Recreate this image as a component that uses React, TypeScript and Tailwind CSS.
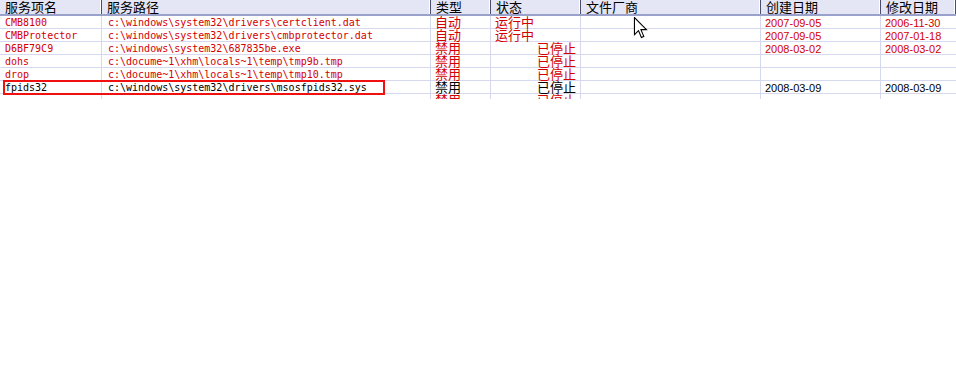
import React from 'react';

type Row = {
  name: string;
  path: string;
  type: string;
  status: string;
  stopped: boolean;
  created: string;
  modified: string;
  red: boolean;
};

const rows: Row[] = [
  { name: 'CMB8100', path: 'c:\\windows\\system32\\drivers\\certclient.dat', type: '自动', status: '运行中', stopped: false, created: '2007-09-05', modified: '2006-11-30', red: true },
  { name: 'CMBProtector', path: 'c:\\windows\\system32\\drivers\\cmbprotector.dat', type: '自动', status: '运行中', stopped: false, created: '2007-09-05', modified: '2007-01-18', red: true },
  { name: 'D6BF79C9', path: 'c:\\windows\\system32\\687835be.exe', type: '禁用', status: '已停止', stopped: true, created: '2008-03-02', modified: '2008-03-02', red: true },
  { name: 'dohs', path: 'c:\\docume~1\\xhm\\locals~1\\temp\\tmp9b.tmp', type: '禁用', status: '已停止', stopped: true, created: '', modified: '', red: true },
  { name: 'drop', path: 'c:\\docume~1\\xhm\\locals~1\\temp\\tmp10.tmp', type: '禁用', status: '已停止', stopped: true, created: '', modified: '', red: true },
  { name: 'fpids32', path: 'c:\\windows\\system32\\drivers\\msosfpids32.sys', type: '禁用', status: '已停止', stopped: true, created: '2008-03-09', modified: '2008-03-09', red: false },
  { name: '', path: '', type: '禁用', status: '已停止', stopped: true, created: '', modified: '', red: true },
];

const cjk = 'text-[13px] leading-[12px] [font-family:"Noto_Sans_CJK_SC",sans-serif]';
const mono = 'text-[10px] leading-[12px] [font-family:"DejaVu_Sans_Mono",monospace]';
const sans = 'text-[11px] leading-[12px] [font-family:"Liberation_Sans",sans-serif]';

const headers = ['服务项名', '服务路径', '类型', '状态', '文件厂商', '创建日期', '修改日期'];
const widths = ['w-[102px]', 'w-[329px]', 'w-[60px]', 'w-[90px]', 'w-[180px]', 'w-[120px]', 'flex-1'];

function Cursor() {
  return (
    <svg className="absolute left-[633px] top-[17px]" width="15" height="22" viewBox="0 0 12 20">
      <path d="M0.5 0.5 L0.5 16 L4.2 12.4 L6.8 18.6 L9 17.6 L6.4 11.5 L11.4 11.5 Z" fill="#fff" stroke="#000" strokeWidth="1" />
    </svg>
  );
}

export default function App() {
  return (
    <div className="relative w-[956px] h-[384px] bg-white overflow-hidden">
      <div className="h-[99px] overflow-hidden">
        <div className="flex h-[16px] bg-[#e4e6f6] border-b-2 border-[#9aa2cc]">
          {headers.map((h, i) => (
            <div key={h} className={`${widths[i]} border-r border-[#4a4e6a] shadow-[inset_-1px_0_0_#ffffff] pl-[5px] pt-[1px] text-black ${cjk}`}>
              {h}
            </div>
          ))}
        </div>
        {rows.map((r, ri) => {
          const color = r.red ? 'text-[#d40000]' : 'text-black';
          return (
            <div key={ri} className={`flex h-[13px] border-b border-[#d6d8ee] ${color}`}>
              <div className={`${widths[0]} border-r border-[#d6d8ee] pl-[5px] pt-[1px] ${mono}`}>{r.name}</div>
              <div className={`${widths[1]} border-r border-[#d6d8ee] pl-[6px] pt-[1px] ${mono}`}>{r.path}</div>
              <div className={`${widths[2]} border-r border-[#d6d8ee] pl-[4px] ${cjk}`}>{r.type}</div>
              <div className={`${widths[3]} border-r border-[#d6d8ee] ${r.stopped ? 'pl-[46px]' : 'pl-[4px]'} ${cjk}`}>{r.status}</div>
              <div className={`${widths[4]} border-r border-[#d6d8ee]`} />
              <div className={`${widths[5]} border-r border-[#d6d8ee] pl-[4px] pt-[1px] ${sans}`}>{r.created}</div>
              <div className={`${widths[6]} pl-[4px] pt-[1px] ${sans}`}>{r.modified}</div>
            </div>
          );
        })}
      </div>
      <div className="absolute left-[3px] top-[80px] w-[382px] h-[15px] border-2 border-[#f01010]" />
      <Cursor />
    </div>
  );
}
